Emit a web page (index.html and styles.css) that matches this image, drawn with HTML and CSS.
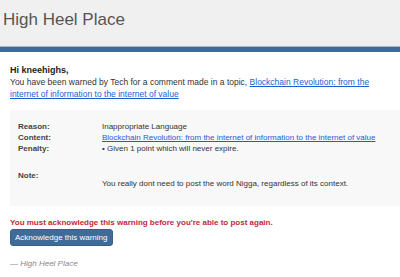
FILE: index.html
```html
<!DOCTYPE html>
<html lang="en">
<head>
    <meta charset="UTF-8">
    <title>Warning</title>
    <link rel="stylesheet" href="styles.css">
</head>
<body>
    <div class="header">
        <h1>High Heel Place</h1>
    </div>
    <div class="content">
        <p class="greeting">Hi kneehighs,</p>
        <p class="intro">You have been warned by Tech for a comment made in a topic, <a href="#">Blockchain Revolution: from the internet of information to the internet of value</a></p>
        <div class="details">
            <div class="row">
                <div class="label">Reason:</div>
                <div class="value">Inappropriate Language</div>
            </div>
            <div class="row">
                <div class="label">Content:</div>
                <div class="value"><a href="#">Blockchain Revolution: from the internet of information to the internet of value</a></div>
            </div>
            <div class="row">
                <div class="label">Penalty:</div>
                <div class="value">&bull; Given 1 point which will never expire.</div>
            </div>
            <div class="row note">
                <div class="label">Note:</div>
                <div class="value">You really dont need to post the word Nigga, regardless of its context.</div>
            </div>
        </div>
        <p class="must">You must acknowledge this warning before you're able to post again.</p>
        <button class="ack">Acknowledge this warning</button>
        <p class="sign">&mdash; High Heel Place</p>
    </div>
</body>
</html>
```

FILE: styles.css
```css
body {
    margin: 0;
    background: #fff;
    color: #333;
    font-family: "Liberation Sans", Arial, sans-serif;
    font-size: 8.5px;
    line-height: 12px;
}
.header {
    background: #f0f0f0;
    height: 46px;
    border-bottom: 1px solid #a9b8c6;
    box-shadow: 0 5px 0 #3f6b97;
}
.header h1 {
    margin: 0;
    padding: 8px 3px;
    font-size: 17px;
    font-weight: 300;
    line-height: 24px;
    color: #555;
}
.content {
    padding: 17px 0 0 10px;
}
p {
    margin: 0;
}
a {
    color: #1a5fd1;
}
.greeting {
    font-weight: bold;
    font-size: 9px;
    color: #222;
}
.intro {
    max-width: 368px;
}
.details {
    margin-top: 10px;
    background: #f8f8f8;
    padding: 11px 0 17px 8px;
    font-size: 8px;
}
.row {
    display: flex;
    line-height: 11px;
}
.label {
    width: 84px;
    flex-shrink: 0;
    font-weight: bold;
    color: #444;
}
.note {
    margin-top: 16px;
}
.note .value {
    padding-top: 8px;
}
.must {
    margin-top: 11px;
    color: #c0283b;
    font-weight: bold;
    font-size: 8px;
}
.ack {
    background: #3f6b97;
    color: #fff;
    border: 1px solid #35608a;
    border-radius: 3px;
    font-family: inherit;
    font-size: 8px;
    line-height: 11px;
    padding: 2px 4px;
    margin-top: 0;
}
.sign {
    margin-top: 12px;
    font-style: italic;
    color: #888;
    font-size: 8px;
}
```
